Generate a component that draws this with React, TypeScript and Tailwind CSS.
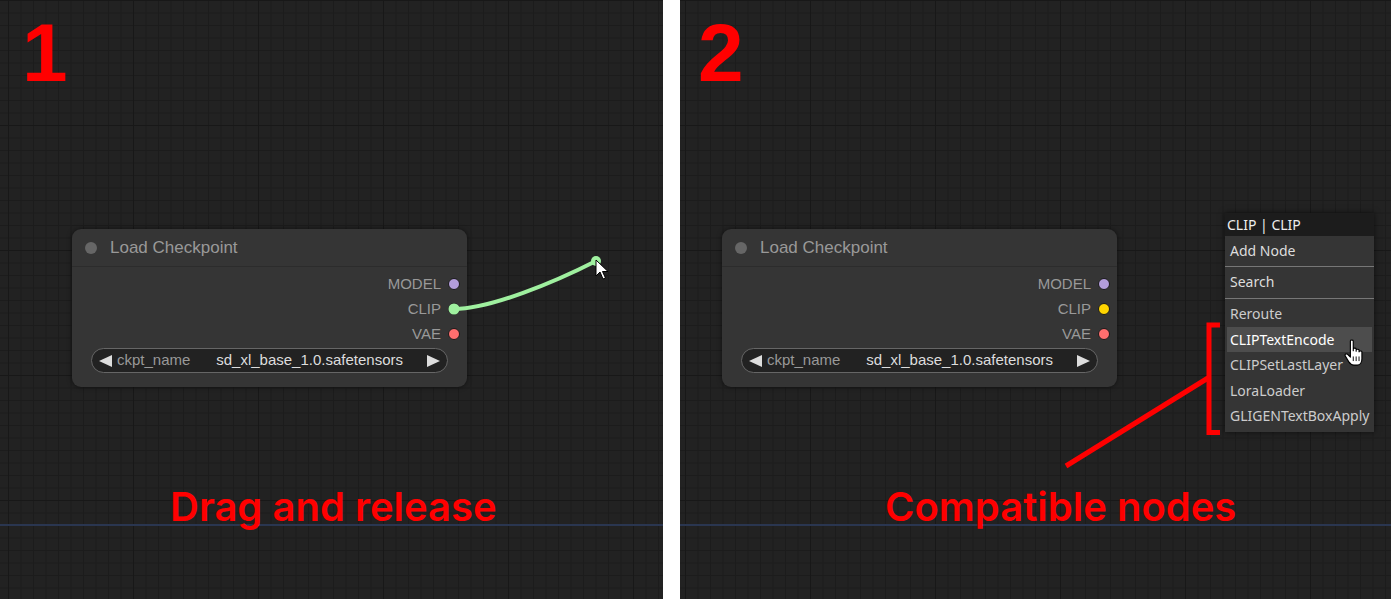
import React from 'react';

const gridBg =
  'bg-[#222222] bg-[linear-gradient(to_right,#181818_1px,transparent_1px),linear-gradient(to_bottom,#181818_1px,transparent_1px),linear-gradient(to_right,#1c1c1c_1px,transparent_1px),linear-gradient(to_bottom,#1c1c1c_1px,transparent_1px)] bg-[size:125px_125px,125px_125px,12.5px_12.5px,12.5px_12.5px]';

interface Slot {
  name: string;
  color: string;
}

const Tri = ({ dir }: { dir: 'left' | 'right' }) => (
  <svg width="13" height="12" viewBox="0 0 13 12" className="shrink-0">
    {dir === 'left' ? <polygon points="0,6 13,0 13,12" fill="#ddd" /> : <polygon points="13,6 0,0 0,12" fill="#ddd" />}
  </svg>
);

const LoadCheckpoint = ({ slots, className }: { slots: Slot[]; className: string }) => (
  <div
    className={`absolute w-[395px] rounded-[9px] bg-[#353535] shadow-[0_0_5px_rgba(0,0,0,0.55)] flex flex-col font-['Liberation_Sans',Arial,sans-serif] ${className}`}
  >
    {/* title */}
    <div className="h-[38px] flex items-center pl-[13px] border-b border-[#2c2c2c]">
      <div className="w-3 h-3 rounded-full bg-[#666]" />
      <span className="ml-[13px] text-[17px] text-[#999]">Load Checkpoint</span>
    </div>

    {/* outputs */}
    <div className="flex flex-col items-end pr-[7px] pt-[4px]">
      {slots.map(s => (
        <div key={s.name} className="h-[25px] flex items-center gap-[7px]">
          <span className="text-[15px] text-[#999] leading-none">{s.name}</span>
          <div className="w-[12px] h-[12px] rounded-full border border-[#1a1a1a]" style={{ background: s.color }} />
        </div>
      ))}
    </div>

    {/* combo widget */}
    <div className="mx-[19px] mt-[2px] mb-[14px] h-[25px] rounded-full bg-[#222] border border-[#666] flex items-center pl-[7px] pr-[7px] text-[15px]">
      <Tri dir="left" />
      <span className="ml-[5px] text-[#999]">ckpt_name</span>
      <span className="ml-auto mr-[24px] text-[#ddd]">sd_xl_base_1.0.safetensors</span>
      <Tri dir="right" />
    </div>
  </div>
);

const ArrowCursor = () => (
  <svg className="absolute left-[595px] top-[259px]" width="14" height="22" viewBox="0 0 14 22">
    <path d="M1 1 L1 17 L5 13 L8 20 L10.5 19 L7.5 12.5 L13 12.5 Z" fill="#fff" stroke="#000" strokeWidth="1" strokeLinejoin="round" />
  </svg>
);

const HandCursor = () => (
  <svg className="absolute left-[1343px] top-[338px]" width="24" height="30" viewBox="0 0 20 26">
    <path
      d="M6 2.5 C6 1.5 8.5 1.5 8.5 2.5 L8.5 11 L8.5 9.5 C8.5 8.5 11 8.5 11 9.5 L11 11.5 L11 10.5 C11 9.5 13.5 9.5 13.5 10.5 L13.5 12 C13.5 11 16 11 16 12 L16 18 C16 21 14.5 23.5 12 23.5 L9 23.5 C7 23.5 5.5 22 4.5 20.5 L1.5 15.5 C0.8 14.3 2.5 13 3.6 14.2 L6 16.5 Z"
      fill="#fff"
      stroke="#000"
      strokeWidth="1"
      strokeLinejoin="round"
    />
    <path d="M8.5 16 L8.5 20 M11 16 L11 20 M13.5 16 L13.5 20" stroke="#000" strokeWidth="0.8" />
  </svg>
);

const menuItems = ['Reroute', 'CLIPTextEncode', 'CLIPSetLastLayer', 'LoraLoader', 'GLIGENTextBoxApply'];

const ContextMenu = () => (
  <div className="absolute left-[1225px] top-[213px] w-[149px] bg-[#353535] shadow-[0_0_6px_rgba(0,0,0,0.6)] font-['Noto_Sans','Open_Sans',sans-serif] text-[14px] pb-[3px]">
    <div className="h-[23px] bg-[#1c1c1c] text-[#eee] flex items-center pl-[2px]">CLIP | CLIP</div>
    <div className="pt-[2px] flex flex-col px-[2px]">
      <div className="h-[25px] flex items-center pl-[3px] text-[#ddd]">Add Node</div>
      <div className="mt-[3px] mb-[2px] mx-[-2px] h-px bg-[#777]" />
      <div className="h-[25px] flex items-center pl-[3px] text-[#ddd]">Search</div>
      <div className="mt-[4px] mb-[2px] mx-[-2px] h-px bg-[#777]" />
      {menuItems.map(m => (
        <div
          key={m}
          className={`h-[25.5px] flex items-center pl-[3px] ${m === 'CLIPTextEncode' ? 'bg-[#4d4d4d] text-white' : 'text-[#ccc]'}`}
        >
          {m}
        </div>
      ))}
    </div>
  </div>
);

const Caption = ({ children, className }: { children: React.ReactNode; className: string }) => (
  <div className={`absolute font-['Inter',sans-serif] font-semibold text-[40px] leading-none text-[#ff0000] ${className}`}>{children}</div>
);

const Number = ({ children, className }: { children: React.ReactNode; className: string }) => (
  <div className={`absolute font-['Liberation_Sans',Arial,sans-serif] font-bold text-[82px] leading-none text-[#ff0000] ${className}`}>
    {children}
  </div>
);

export default function App() {
  return (
    <div className="w-[1391px] h-[599px] flex bg-white overflow-hidden">
      {/* panel 1 */}
      <div className={`relative w-[663px] h-full ${gridBg} bg-[position:8px_0px]`}>
        <div className="absolute left-0 right-0 top-[524px] h-[2px] bg-[#2a3650]" />
        <Number className="left-[22px] top-[12px]">1</Number>
        <LoadCheckpoint
          className="left-[72px] top-[229px]"
          slots={[
            { name: 'MODEL', color: '#b39ddb' },
            { name: 'CLIP', color: '#a3f0a3' },
            { name: 'VAE', color: '#ff6e6e' },
          ]}
        />
        <svg className="absolute left-0 top-0" width="663" height="599">
          <path d="M454 309 C 490 309, 555 282, 596 261" stroke="#9ff09f" strokeWidth="4" fill="none" strokeLinecap="round" />
          <circle cx="596" cy="261" r="5" fill="#9ff09f" />
          <circle cx="454" cy="309" r="5.5" fill="#9ff09f" />
        </svg>
        <ArrowCursor />
        <Caption className="left-[170px] top-[487px]">Drag and release</Caption>
      </div>

      {/* divider */}
      <div className="w-[17px] h-full bg-white" />

      {/* panel 2 */}
      <div className={`relative flex-1 h-full ${gridBg} bg-[position:5px_0px]`}>
        <div className="absolute left-0 right-0 top-[524px] h-[2px] bg-[#2a3650]" />
        <Number className="left-[18px] top-[12px]">2</Number>
        <LoadCheckpoint
          className="left-[42px] top-[229px]"
          slots={[
            { name: 'MODEL', color: '#b39ddb' },
            { name: 'CLIP', color: '#ffd500' },
            { name: 'VAE', color: '#ff6e6e' },
          ]}
        />
        <svg className="absolute left-0 top-0" width="711" height="599">
          <path d="M540 325 L529 325 L529 432.5 L540 432.5" stroke="#ff0000" strokeWidth="5" fill="none" />
          <path d="M528 378 L386 466" stroke="#ff0000" strokeWidth="5" fill="none" />
        </svg>
        <div className="absolute inset-0 -left-[680px]">
          <ContextMenu />
          <HandCursor />
        </div>
        <Caption className="left-[205px] top-[487px]">Compatible nodes</Caption>
      </div>
    </div>
  );
}
